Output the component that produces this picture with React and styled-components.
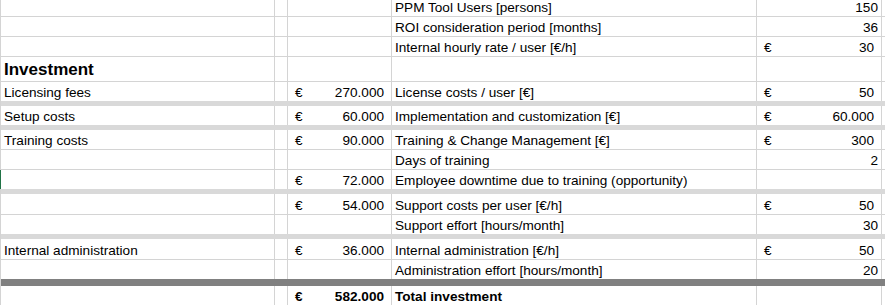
import React from "react";
import styled, { createGlobalStyle, css } from "styled-components";

const Global = createGlobalStyle`
  html, body { margin: 0; padding: 0; background: #fff; }
  body { font-family: "Liberation Sans", Arial, sans-serif; color: #000; }
`;

const COLS = "275px 13px 104px 365px 125px 1fr";
const GRID = "#d4d4d4";

const Sheet = styled.div`
  width: 885px;
  height: 305px;
  overflow: hidden;
  display: flex;
  flex-direction: column;
`;

const Row = styled.div`
  display: grid;
  grid-template-columns: ${COLS};
  height: ${(p) => p.$h}px;
  flex: none;
`;

const Band = styled.div`
  flex: none;
  height: ${(p) => p.$h}px;
  background: ${(p) => (p.$dark ? "#808080" : "#d9d9d9")};
  border-left: 1px solid ${GRID};
  box-sizing: border-box;
`;

const Cell = styled.div`
  box-sizing: border-box;
  border-right: 1px solid ${GRID};
  border-bottom: ${(p) => (p.$noLine ? "none" : `1px solid ${GRID}`)};
  ${(p) =>
    p.$first &&
    css`
      border-left: 1px solid ${p.$active ? "#217346" : GRID};
    `}
  display: flex;
  align-items: flex-end;
  justify-content: ${(p) => (p.$right ? "flex-end" : "flex-start")};
  padding: 0 3px 1px 3px;
  font-size: 13.6px;
  line-height: 15px;
  font-weight: ${(p) => (p.$bold ? 700 : 400)};
  white-space: nowrap;
  overflow: visible;
  position: relative;
`;

const Heading = styled.span`
  font-size: 17px;
  font-weight: 700;
  line-height: 20px;
`;

const Money = styled.div`
  flex: 1;
  display: flex;
  justify-content: space-between;
  padding: 0 4px 0 4px;
`;

const rows = [
  { h: 17, d: "PPM Tool Users [persons]", e: { v: "150" } },
  { h: 20, d: "ROI consideration period [months]", e: { v: "36" } },
  { h: 20, d: "Internal hourly rate / user [€/h]", e: { v: "30", eur: true } },
  { h: 25, heading: "Investment" },
  { h: 19, noLine: true, a: "Licensing fees", c: "270.000", d: "License costs / user [€]", e: { v: "50", eur: true } },
  { band: 5 },
  { h: 19, noLine: true, a: "Setup costs", c: "60.000", d: "Implementation and customization [€]", e: { v: "60.000", eur: true } },
  { band: 5 },
  { h: 20, a: "Training costs", c: "90.000", d: "Training & Change Management [€]", e: { v: "300", eur: true } },
  { h: 20, d: "Days of training", e: { v: "2" } },
  { h: 19, noLine: true, active: true, c: "72.000", d: "Employee downtime due to training (opportunity)" },
  { band: 5 },
  { h: 21, c: "54.000", d: "Support costs per user [€/h]", e: { v: "50", eur: true } },
  { h: 19, noLine: true, d: "Support effort [hours/month]", e: { v: "30" } },
  { band: 5 },
  { h: 21, a: "Internal administration", c: "36.000", d: "Internal administration [€/h]", e: { v: "50", eur: true } },
  { h: 19, noLine: true, d: "Administration effort [hours/month]", e: { v: "20" } },
  { band: 7, dark: true },
  { h: 20, bold: true, c: "582.000", d: "Total investment" },
];

function MoneyCell({ v, bold, noLine }) {
  return (
    <Cell $noLine={noLine} $bold={bold}>
      <Money>
        <span>€</span>
        <span>{v}</span>
      </Money>
    </Cell>
  );
}

export default function App() {
  return (
    <>
      <Global />
      <Sheet>
        {rows.map((r, i) => {
          if (r.band) return <Band key={i} $h={r.band} $dark={r.dark} />;
          return (
            <Row key={i} $h={r.h}>
              <Cell $first $active={r.active} $noLine={r.noLine}>
                {r.heading ? <Heading>{r.heading}</Heading> : r.a}
              </Cell>
              <Cell $noLine={r.noLine} />
              {r.c ? (
                <MoneyCell v={r.c} bold={r.bold} noLine={r.noLine} />
              ) : (
                <Cell $noLine={r.noLine} />
              )}
              <Cell $noLine={r.noLine} $bold={r.bold}>
                {r.d}
              </Cell>
              {r.e && r.e.eur ? (
                <MoneyCell v={r.e.v} noLine={r.noLine} />
              ) : (
                <Cell $noLine={r.noLine} $right>
                  {r.e ? r.e.v : ""}
                </Cell>
              )}
              <Cell $noLine={r.noLine} />
            </Row>
          );
        })}
      </Sheet>
    </>
  );
}
